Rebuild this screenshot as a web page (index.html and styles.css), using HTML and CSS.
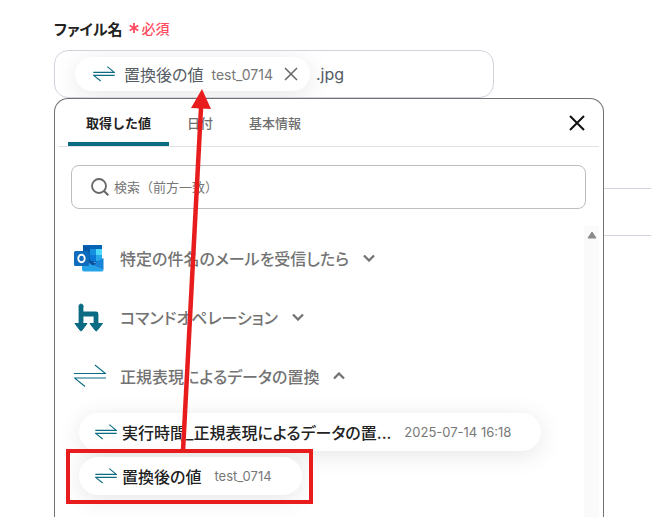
FILE: index.html
```html
<!DOCTYPE html>
<html lang="ja">
<head>
<meta charset="utf-8">
<title>ファイル名</title>
<link rel="stylesheet" href="styles.css">
</head>
<body>
<svg class="defs" aria-hidden="true">
  <symbol id="swap" viewBox="0 0 32 24">
    <path d="M0 9.5H31.5L21 1M32 14H0.5L11 22.5" fill="none" stroke="currentColor" stroke-width="1.1" vector-effect="non-scaling-stroke"/>
  </symbol>
  <symbol id="chevron" viewBox="0 0 12 8">
    <path d="M1 1.5L6 6.5L11 1.5" fill="none" stroke="currentColor" stroke-width="2.3"/>
  </symbol>
</svg>
<main class="form">
  <label class="label" for="filename">ファイル名
    <span class="required"><svg class="star" viewBox="0 0 10 10"><path d="M5 0V10M.7 2.5L9.3 7.5M9.3 2.5L.7 7.5" stroke="currentColor" stroke-width="1.8"/></svg>必須</span>
  </label>
  <div class="field">
    <span class="chip">
      <svg class="swap-small"><use href="#swap"/></svg>
      <span class="chip-name">置換後の値</span>
      <span class="chip-note">test_0714</span>
      <button class="remove" aria-label="削除"><svg viewBox="0 0 14 14"><path d="M1 1L13 13M13 1L1 13" stroke="currentColor" stroke-width="1.5"/></svg></button>
    </span>
    <input class="field-input" id="filename" type="text" value=".jpg">
  </div>
  <div class="next-field"></div>

  <section class="panel">
    <header class="panel-head">
      <nav class="tabs">
        <button class="tab active">取得した値</button>
        <button class="tab">日付</button>
        <button class="tab">基本情報</button>
      </nav>
      <button class="close" aria-label="閉じる"><svg viewBox="0 0 16 16"><path d="M1 1L15 15M15 1L1 15" stroke="currentColor" stroke-width="2"/></svg></button>
    </header>
    <div class="search">
      <svg class="search-icon" viewBox="0 0 18 18"><circle cx="8" cy="8" r="7" fill="none" stroke="currentColor" stroke-width="1.8"/><path d="M13 13L17.3 17.3" stroke="currentColor" stroke-width="2"/></svg>
      <input class="search-input" type="text" aria-label="検索" placeholder="検索（前方一致）">
    </div>
    <div class="results">
      <div class="list">
        <button class="group">
          <svg class="group-icon" viewBox="0 0 32 32">
            <path d="M9 3h19v17H9z" fill="#0364b8"/>
            <path d="M9 4.500h7v6H9z" fill="#0358a7"/>
            <path d="M16 7h6v6h-6z" fill="#1490df"/>
            <path d="M22 7h6v6h-6z" fill="#50d9ff"/>
            <path d="M16 13h6v6h-6z" fill="#0a78d4"/>
            <path d="M22 13h6v6h-6z" fill="#28a8ea"/>
            <path d="M8 18L29.500 28Q29 29.500 27.500 29.500H10Q8 29.500 8 27.500z" fill="#24a3e8"/>
            <path d="M29.500 16V28L17 22.500z" fill="#1784d8"/>
            <path d="M15 17.500L22 21.500L19 23.500L13 20z" fill="#0a4f9c"/>
            <rect y="9" width="15" height="15" rx="1.500" fill="#0f6cbd"/>
            <ellipse cx="7.500" cy="16.500" rx="3.200" ry="3.700" fill="none" stroke="#fff" stroke-width="1.900"/>
          </svg>
          <span>特定の件名のメールを受信したら</span>
          <svg class="chevron"><use href="#chevron"/></svg>
        </button>
        <button class="group">
          <svg class="group-icon" viewBox="0 0 32 32">
            <path d="M7 5V24M7 13H22V24" fill="none" stroke="#0b6b83" stroke-width="4.800" stroke-linejoin="round"/>
            <path d="M5 5.500Q5 3 7 3T9.200 5.500zM1 22.500H13L7.800 29.500Q7 30.400 6.200 29.500zM16 22.500H28.500L23 29.500Q22.200 30.400 21.400 29.500z" fill="#0b6b83" stroke="#0b6b83" stroke-linejoin="round"/>
          </svg>
          <span>コマンドオペレーション</span>
          <svg class="chevron"><use href="#chevron"/></svg>
        </button>
        <button class="group">
          <svg class="group-icon swap-large"><use href="#swap"/></svg>
          <span>正規表現によるデータの置換</span>
          <svg class="chevron up"><use href="#chevron"/></svg>
        </button>
        <div class="values">
          <button class="value">
            <svg class="swap-small"><use href="#swap"/></svg>
            <span class="value-name">実行時間_正規表現によるデータの置...</span>
            <span class="value-note">2025-07-14 16:18</span>
          </button>
          <button class="value">
            <svg class="swap-small"><use href="#swap"/></svg>
            <span class="value-name">置換後の値</span>
            <span class="value-note">test_0714</span>
          </button>
        </div>
      </div>
      <div class="scrollbar"><svg viewBox="0 0 10 8"><path d="M5 1L9 7H1z" fill="#8a8a8a" stroke="#8a8a8a" stroke-linejoin="round"/></svg></div>
    </div>
  </section>
  <svg class="annotation" viewBox="0 0 260 420">
    <path d="M147 22L129 365" fill="none" stroke="#e81c1c" stroke-width="4.500"/>
    <path d="M148 3L137 22L157 23z" fill="#e81c1c"/>
    <rect x="14" y="365" width="243" height="51" fill="none" stroke="#e81c1c" stroke-width="4"/>
  </svg>
</main>
</body>
</html>
```
FILE: styles.css
```css
* {
  box-sizing: border-box;
}

body {
  margin: 0;
  background: #fff;
  color: #222;
  font-family: Inter, "Noto Sans CJK JP", sans-serif;
  font-feature-settings: "palt";
}

button,
input {
  padding: 0;
  border: 0;
  background: none;
  color: inherit;
  font: inherit;
  font-feature-settings: inherit;
}

svg {
  display: block;
  flex: none;
}

.defs {
  position: absolute;
  width: 0;
  height: 0;
}

.form {
  position: relative;
  min-height: 100vh;
  padding: 18px 0 0 54px;
  overflow: hidden;
}

.label {
  display: flex;
  align-items: center;
  gap: 6px;
  height: 20px;
  margin-bottom: 12px;
  font-size: 15px;
  font-weight: 700;
}

.required {
  display: flex;
  align-items: center;
  gap: 3px;
  color: #ff4b5f;
  font-size: 14px;
  font-weight: 500;
}

.star {
  width: 10px;
  height: 10px;
}

.field {
  display: flex;
  align-items: center;
  gap: 6px;
  height: 48px;
  margin-right: 157px;
  padding: 0 20px;
  border: 1px solid #d0d3dc;
  border-radius: 14px;
  overflow: hidden;
}

.chip,
.value {
  display: flex;
  align-items: center;
  border-radius: 20px;
  background: #fff;
  box-shadow: 0 4px 24px rgba(0, 0, 0, 0.1);
}

.chip {
  flex: none;
  height: 34px;
  padding: 0 12px 0 18px;
}

.swap-small {
  width: 22px;
  height: 16px;
  color: #0b6b83;
}

.chip-name {
  margin: 0 8px 0 9px;
  color: #555b63;
  font-size: 16px;
}

.chip-note {
  color: #777;
  font-size: 14px;
}

.remove {
  margin-left: 11px;
  color: #666;
}

.remove svg {
  width: 14px;
  height: 14px;
}

.field-input {
  flex: 1;
  min-width: 0;
  color: #555b63;
  font-size: 16px;
}

.next-field {
  height: 48px;
  margin-top: 90px;
  border-top: 1px solid #d0d3dc;
  border-bottom: 1px solid #d0d3dc;
}

.panel {
  position: absolute;
  inset: 98px 47px 0 54px;
  display: flex;
  flex-direction: column;
  padding: 0 4px 0 3px;
  border: 1px solid #727272;
  border-bottom: 0;
  border-radius: 14px 14px 0 0;
  background: #fff;
}

.panel-head {
  display: flex;
  align-items: center;
  justify-content: space-between;
  flex: none;
  height: 48px;
  padding: 0 14px 0 10px;
  border-bottom: 1px solid #e2e2e4;
}

.tabs {
  display: flex;
  height: 47px;
}

.tab {
  padding: 3px 18px 0;
  border-bottom: 4px solid transparent;
  color: #6f6f6f;
  font-size: 13px;
  font-weight: 500;
  font-feature-settings: normal;
}

.active {
  border-color: #0b6b83;
  border-radius: 4px 4px 0 0;
  color: #222;
  font-weight: 700;
}

.close {
  color: #111;
}

.close svg {
  width: 16px;
  height: 16px;
}

.search {
  display: flex;
  align-items: center;
  gap: 5px;
  flex: none;
  height: 44px;
  margin: 18px 13px 17px;
  padding: 0 19px;
  border: 1px solid #bdbdbd;
  border-radius: 8px;
}

.search-icon {
  width: 18px;
  height: 18px;
  color: #666;
}

.search-input {
  flex: 1;
  min-width: 0;
  font-size: 13px;
  font-feature-settings: normal;
}

.search-input::placeholder {
  color: #777;
}

.results {
  display: flex;
  flex: 1;
  min-height: 0;
}

.list {
  flex: 1;
  min-width: 0;
  padding: 2px 0 0 16px;
  overflow: hidden;
}

.group {
  display: flex;
  align-items: center;
  height: 59px;
  color: #737373;
  font-size: 16px;
  font-weight: 500;
}

.group-icon {
  width: 32px;
  height: 32px;
  margin-right: 14px;
}

.swap-large {
  height: 24px;
  color: #0b6b83;
}

.chevron {
  width: 12px;
  height: 8px;
  margin-left: 14px;
}

.up {
  transform: rotate(180deg);
}

.values {
  display: flex;
  flex-direction: column;
  align-items: flex-start;
  gap: 6px;
  padding: 8px 0 0 5px;
}

.value {
  height: 38px;
  padding: 0 30px 0 16px;
}

.value-name {
  margin: 0 13px 0 5px;
  font-size: 16px;
  font-weight: 500;
}

.value-note {
  color: #777;
  font-size: 13px;
}

.scrollbar {
  display: flex;
  justify-content: center;
  align-items: flex-start;
  width: 15px;
  padding-top: 5px;
  background: #fafafa;
}

.scrollbar svg {
  width: 10px;
  height: 8px;
}

.annotation {
  position: absolute;
  top: 86px;
  left: 54px;
  width: 260px;
  height: 420px;
  pointer-events: none;
}
```
